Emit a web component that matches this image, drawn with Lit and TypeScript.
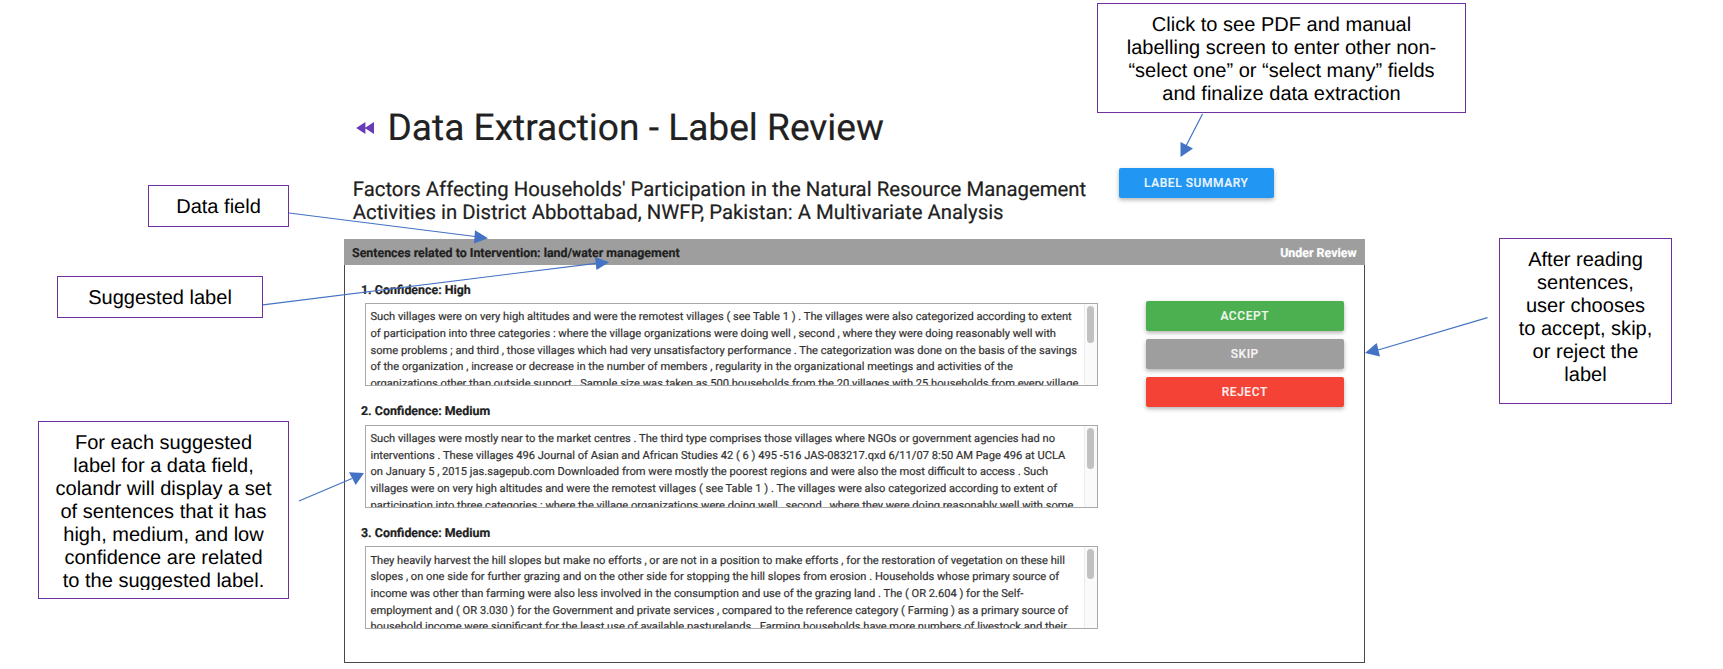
import { LitElement, html, css, svg } from "lit";
import { customElement, property } from "lit/decorators.js";
import { styleMap } from "lit/directives/style-map.js";

interface Sentence {
  confidence: string;
  thumb: number;
  lines: string[];
}

const SENTENCES: Sentence[] = [
  {
    confidence: "High",
    thumb: 37,
    lines: [
      "Such villages were on very high altitudes and were the remotest villages ( see Table 1 ) . The villages were also categorized according to extent",
      "of participation into three categories : where the village organizations were doing well , second , where they were doing reasonably well with",
      "some problems ; and third , those villages which had very unsatisfactory performance . The categorization was done on the basis of the savings",
      "of the organization , increase or decrease in the number of members , regularity in the organizational meetings and activities of the",
      "organizations other than outside support . Sample size was taken as 500 households from the 20 villages with 25 households from every village",
    ],
  },
  {
    confidence: "Medium",
    thumb: 41,
    lines: [
      "Such villages were mostly near to the market centres . The third type comprises those villages where NGOs or government agencies had no",
      "interventions . These villages 496 Journal of Asian and African Studies 42 ( 6 ) 495 -516 JAS-083217.qxd 6/11/07 8:50 AM Page 496 at UCLA",
      "on January 5 , 2015 jas.sagepub.com Downloaded from were mostly the poorest regions and were also the most difficult to access . Such",
      "villages were on very high altitudes and were the remotest villages ( see Table 1 ) . The villages were also categorized according to extent of",
      "participation into three categories : where the village organizations were doing well , second , where they were doing reasonably well with some",
    ],
  },
  {
    confidence: "Medium",
    thumb: 29.5,
    lines: [
      "They heavily harvest the hill slopes but make no efforts , or are not in a position to make efforts , for the restoration of vegetation on these hill",
      "slopes , on one side for further grazing and on the other side for stopping the hill slopes from erosion . Households whose primary source of",
      "income was other than farming were also less involved in the consumption and use of the grazing land . The ( OR 2.604 ) for the Self-",
      "employment and ( OR 3.030 ) for the Government and private services , compared to the reference category ( Farming ) as a primary source of",
      "household income were significant for the least use of available pasturelands . Farming households have more numbers of livestock and their",
    ],
  },
];

@customElement("sentence-box")
class SentenceBox extends LitElement {
  @property({ type: Number }) index = 1;
  @property({ attribute: false }) sentence!: Sentence;

  static styles = css`
    :host { display: block; }
    .heading {
      box-sizing: border-box;
      height: 21.2px;
      padding-top: 1px;
      font-size: 12.4px;
      font-weight: 700;
      line-height: 16px;
      color: #212121;
    }
    .box {
      display: flex;
      justify-content: space-between;
      box-sizing: border-box;
      width: 733px;
      height: 83px;
      margin-left: 4.2px;
      border: 1px solid #a9a9a9;
      overflow: hidden;
    }
    .text {
      padding: 5.5px 0 0 4.3px;
      font-size: 11.14px;
      line-height: 16.6px;
      color: #333;
      white-space: pre;
    }
    .track {
      flex: none;
      box-sizing: border-box;
      width: 13px;
      padding: 2px 3px 0 2px;
      background: #fafafa;
      border-left: 1px solid #ececec;
    }
    .thumb {
      width: 7px;
      border-radius: 3.5px;
      background: #c1c1c1;
    }
  `;

  render() {
    return html`
      <div class="heading">${this.index}. Confidence: ${this.sentence.confidence}</div>
      <div class="box">
        <div class="text">${this.sentence.lines.map((l) => html`<div>${l}</div>`)}</div>
        <div class="track">
          <div class="thumb" style=${styleMap({ height: `${this.sentence.thumb}px` })}></div>
        </div>
      </div>
    `;
  }
}

const ARROWS = [
  { from: [1202.5, 114], to: [1186, 146], head: "1180.5,142 1193,148.5 1180.5,157" },
  { from: [289, 213], to: [475, 236.5], head: "475,230.3 488,238.3 474,243.5" },
  { from: [263, 304.8], to: [596, 263.3], head: "595,257 609,262.3 596.5,270" },
  { from: [299, 501], to: [352, 478.5], head: "349,472.3 364,473 355.7,485" },
  { from: [1487.5, 317.7], to: [1378, 350], head: "1365,353 1376.7,343 1380,356.5" },
];

@customElement("app-root")
class AppRoot extends LitElement {
  static styles = css`
    :host {
      display: block;
      position: relative;
      width: 1723px;
      height: 669px;
      overflow: hidden;
      background: #fff;
      font-family: Roboto, sans-serif;
      text-rendering: geometricPrecision;
      color: #212121;
    }
    .page {
      width: 1021px;
      padding: 105.5px 0 0 344px;
      -webkit-text-stroke: 0.2px currentColor;
    }
    .title {
      display: flex;
      align-items: center;
      gap: 11.2px;
      height: 44px;
      padding-left: 11.8px;
    }
    .title svg { display: block; flex: none; }
    h1 {
      margin: 0;
      padding-top: 2px;
      font-size: 37.12px;
      font-weight: 400;
      line-height: 44px;
      white-space: nowrap;
    }
    .summary {
      display: flex;
      height: 89.5px;
    }
    h2 {
      width: 766px;
      margin: 28.4px 0 0 8px;
      box-sizing: border-box;
      padding-left: 0.8px;
      font-size: 20.33px;
      font-weight: 400;
      line-height: 23px;
      white-space: nowrap;
    }
    button {
      display: block;
      height: 30px;
      margin: 0;
      padding: 0;
      border: 0;
      border-radius: 2px;
      color: rgba(255, 255, 255, 0.9);
      font: 500 12px/30px Roboto, sans-serif;
      letter-spacing: 0.55px;
      text-align: center;
      box-shadow: 0 2px 4px rgba(0, 0, 0, 0.3);
    }
    .blue { width: 154.5px; margin: 18.7px 0 0 1px; background: #2196f3; }
    .bar {
      display: flex;
      justify-content: space-between;
      box-sizing: border-box;
      height: 25.5px;
      padding: 1.5px 8.5px 0 8px;
      background: #9e9e9e;
      font-size: 12.4px;
      font-weight: 700;
      line-height: 25px;
    }
    .state { color: #fff; }
    .body {
      display: flex;
      justify-content: space-between;
      box-sizing: border-box;
      height: 398.5px;
      padding: 17.3px 20.5px 0 16px;
      border: 1px solid #484848;
      border-top: 0;
    }
    .sentences {
      display: flex;
      flex-direction: column;
      gap: 17.5px;
    }
    .actions {
      display: flex;
      flex-direction: column;
      gap: 8px;
      width: 197.5px;
      padding-top: 19.6px;
    }
    .accept { background: #4caf50; }
    .skip { background: #9e9e9e; }
    .reject { background: #f44336; }

    .note {
      position: absolute;
      box-sizing: border-box;
      padding-top: 10px;
      border: 1px solid #7030a0;
      background: #fff;
      color: #000;
      font: 20.05px/23px "Liberation Sans", Arial, sans-serif;
      text-align: center;
      white-space: nowrap;
    }
    .note-summary { left: 1097px; top: 3px; width: 369px; height: 110px; }
    .note-field { left: 148px; top: 185px; width: 141px; height: 42px; }
    .note-label { left: 57px; top: 276px; width: 206px; height: 42px; }
    .note-sentences { left: 38px; top: 421px; width: 251px; height: 178px; }
    .note-sentences .clip { height: 158px; overflow: hidden; }
    .note-actions { left: 1499px; top: 238px; width: 173px; height: 166px; }
    .arrows { position: absolute; left: 0; top: 0; }
  `;

  render() {
    return html`
      <div class="page">
        <div class="title">
          <svg width="20.5" height="12" viewBox="0 0 20.5 12">
            <path d="M9.4 0v12L.2 6zM18 0v12L8.8 6z" fill="#673ab7" />
          </svg>
          <h1>Data Extraction - Label Review</h1>
        </div>
        <div class="summary">
          <h2>
            Factors Affecting Households' Participation in the Natural Resource Management<br />
            Activities in District Abbottabad, NWFP, Pakistan: A Multivariate Analysis
          </h2>
          <button class="blue">LABEL SUMMARY</button>
        </div>
        <div class="bar">
          <span>Sentences related to Intervention: land/water management</span>
          <span class="state">Under Review</span>
        </div>
        <div class="body">
          <div class="sentences">
            ${SENTENCES.map(
              (s, i) => html`<sentence-box .index=${i + 1} .sentence=${s}></sentence-box>`
            )}
          </div>
          <div class="actions">
            <button class="accept">ACCEPT</button>
            <button class="skip">SKIP</button>
            <button class="reject">REJECT</button>
          </div>
        </div>
      </div>

      <div class="note note-summary">
        Click to see PDF and manual<br />labelling screen to enter other non-<br />“select one” or
        “select many” fields<br />and finalize data extraction
      </div>
      <div class="note note-field">Data field</div>
      <div class="note note-label">Suggested label</div>
      <div class="note note-sentences">
        <div class="clip">
          For each suggested<br />label for a data field,<br />colandr will display a set<br />of
          sentences that it has<br />high, medium, and low<br />confidence are related<br />to the
          suggested label.
        </div>
      </div>
      <div class="note note-actions">
        After reading<br />sentences,<br />user chooses<br />to accept, skip,<br />or reject the<br />label
      </div>
      <svg class="arrows" width="1723" height="669" viewBox="0 0 1723 669">
        ${ARROWS.map(
          (a) => svg`
            <line x1=${a.from[0]} y1=${a.from[1]} x2=${a.to[0]} y2=${a.to[1]} stroke="#4472c4" stroke-width="1.2" />
            <polygon points=${a.head} fill="#4472c4" />`
        )}
      </svg>
    `;
  }
}
